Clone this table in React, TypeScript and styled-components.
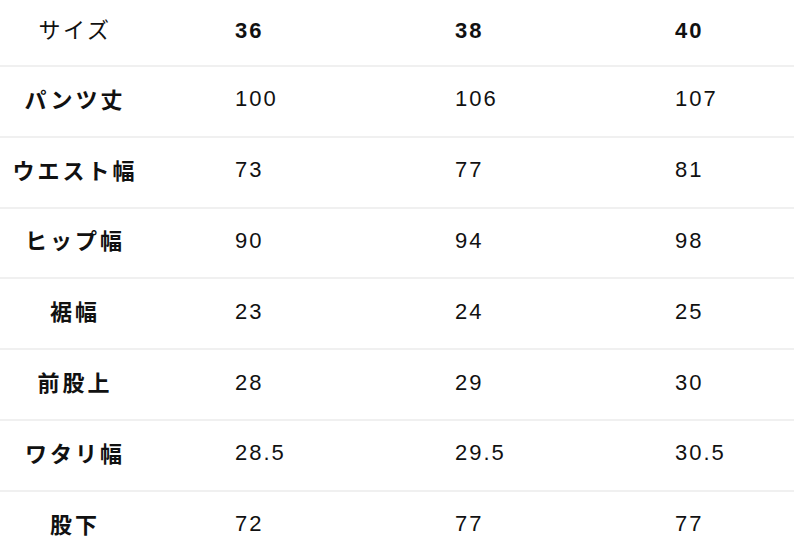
import styled, { createGlobalStyle } from "styled-components";

const GlobalStyle = createGlobalStyle`
  html, body {
    margin: 0;
    padding: 0;
    background: #ffffff;
  }
  body {
    font-family: "Liberation Sans", "Noto Sans CJK JP", sans-serif;
    color: #1a1a1a;
  }
`;

const Table = styled.div`
  width: 794px;
  display: flex;
  flex-direction: column;
`;

const Row = styled.div<{ $head?: boolean }>`
  display: grid;
  grid-template-columns: 150px 220px 220px 1fr;
  height: ${(p) => (p.$head ? "65px" : "68.8px")};
  align-items: center;
  border-bottom: 2px solid #f0f0f0;

  &:last-child {
    border-bottom: none;
  }
`;

const Label = styled.div<{ $plain?: boolean }>`
  text-align: center;
  font-size: 22px;
  letter-spacing: ${(p) => (p.$plain ? "2.5px" : "3px")};
  font-weight: ${(p) => (p.$plain ? 400 : 700)};
  color: #111;
  margin-top: ${(p) => (p.$plain ? "-10px" : "-7px")};
`;

const Cell = styled.div<{ $bold?: boolean }>`
  padding-left: 85px;
  font-size: 22px;
  letter-spacing: 2px;
  font-weight: ${(p) => (p.$bold ? 700 : 400)};
  color: #111;
  margin-top: -4px;
`;

const sizes = ["36", "38", "40"];

const rows: [string, string[]][] = [
  ["パンツ丈", ["100", "106", "107"]],
  ["ウエスト幅", ["73", "77", "81"]],
  ["ヒップ幅", ["90", "94", "98"]],
  ["裾幅", ["23", "24", "25"]],
  ["前股上", ["28", "29", "30"]],
  ["ワタリ幅", ["28.5", "29.5", "30.5"]],
  ["股下", ["72", "77", "77"]],
];

export default function App() {
  return (
    <>
      <GlobalStyle />
      <Table>
        <Row $head>
          <Label $plain>サイズ</Label>
          {sizes.map((s) => (
            <Cell key={s} $bold>
              {s}
            </Cell>
          ))}
        </Row>
        {rows.map(([name, values]) => (
          <Row key={name}>
            <Label>{name}</Label>
            {values.map((v, i) => (
              <Cell key={i}>{v}</Cell>
            ))}
          </Row>
        ))}
      </Table>
    </>
  );
}
